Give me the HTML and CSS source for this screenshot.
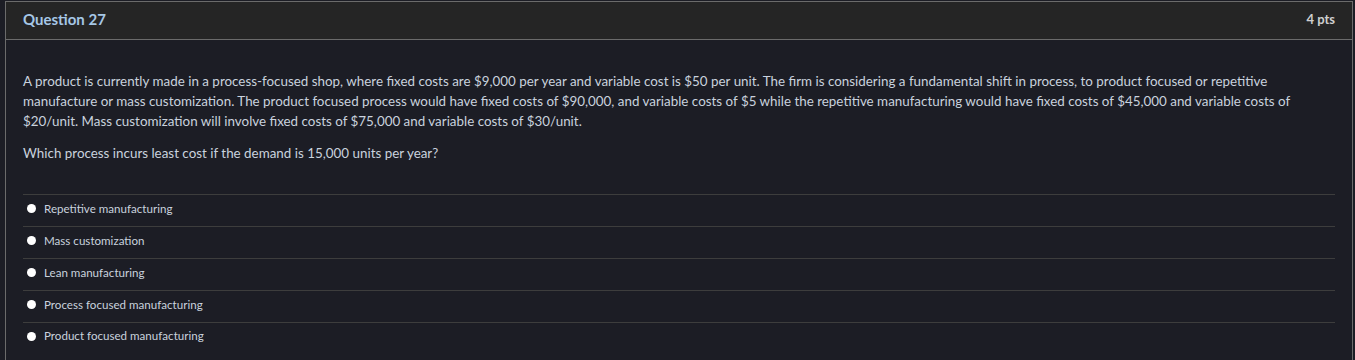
FILE: index.html
```html
<!DOCTYPE html>
<html lang="en">

<head>
    <meta charset="UTF-8">
    <title>Question 27</title>
    <link rel="stylesheet" href="styles.css">
</head>

<body>
    <div class="question">
        <div class="question-header">
            <span class="question-title">Question 27</span>
            <span class="question-points">4 pts</span>
        </div>
        <div class="question-body">
            <p>A product is currently made in a process-focused shop, where fixed costs are $9,000 per year and variable cost is $50 per unit. The firm is considering a fundamental shift in process, to product focused or repetitive manufacture or mass customization. The product focused process would have fixed costs of $90,000, and variable costs of $5 while the repetitive manufacturing would have fixed costs of $45,000 and variable costs of $20/unit. Mass customization will involve fixed costs of $75,000 and variable costs of $30/unit.</p>
            <p>Which process incurs least cost if the demand is 15,000 units per year?</p>

            <div class="answers">
                <label class="answer"><span class="radio"></span>Repetitive manufacturing</label>
                <label class="answer"><span class="radio"></span>Mass customization</label>
                <label class="answer"><span class="radio"></span>Lean manufacturing</label>
                <label class="answer"><span class="radio"></span>Process focused manufacturing</label>
                <label class="answer"><span class="radio"></span>Product focused manufacturing</label>
            </div>
        </div>
    </div>
</body>

</html>
```

FILE: styles.css
```css
body {
    margin: 0;
    padding: 1px 2px 0 5px;
    background-color: #1c1d25;
    font-family: Lato, "Open Sans", sans-serif;
    overflow: hidden;
}

.question {
    border: 1px solid #6b6b6b;
    border-bottom: none;
    height: 359px;
    box-sizing: border-box;
}

.question-header {
    display: flex;
    justify-content: space-between;
    align-items: center;
    height: 37px;
    padding: 0 17px 0 17px;
    background-color: #252525;
    border-bottom: 1px solid #6b6b6b;
    font-weight: bold;
}

.question-title {
    color: #a6c7e6;
    font-size: 15px;
    margin-top: -4px;
}

.question-points {
    color: #cfcfcf;
    font-size: 13px;
    margin-top: -4px;
}

.question-body {
    padding: 31px 17px 0 17px;
    color: #c9d2de;
    font-size: 13.4px;
    line-height: 20px;
}

.question-body p {
    margin: 0 0 12px 0;
}

.answers {
    margin-top: 31px;
}

.answer {
    display: flex;
    align-items: center;
    height: 27px;
    padding-bottom: 4px;
    border-top: 1px solid #3d3d3d;
    font-size: 11.6px;
    color: #c9d2de;
}

.answer:last-child {
    height: 26px;
}

.radio {
    display: inline-block;
    width: 9px;
    height: 9px;
    border-radius: 50%;
    background-color: #ffffff;
    margin: 0 8px 0 4px;
}
```
